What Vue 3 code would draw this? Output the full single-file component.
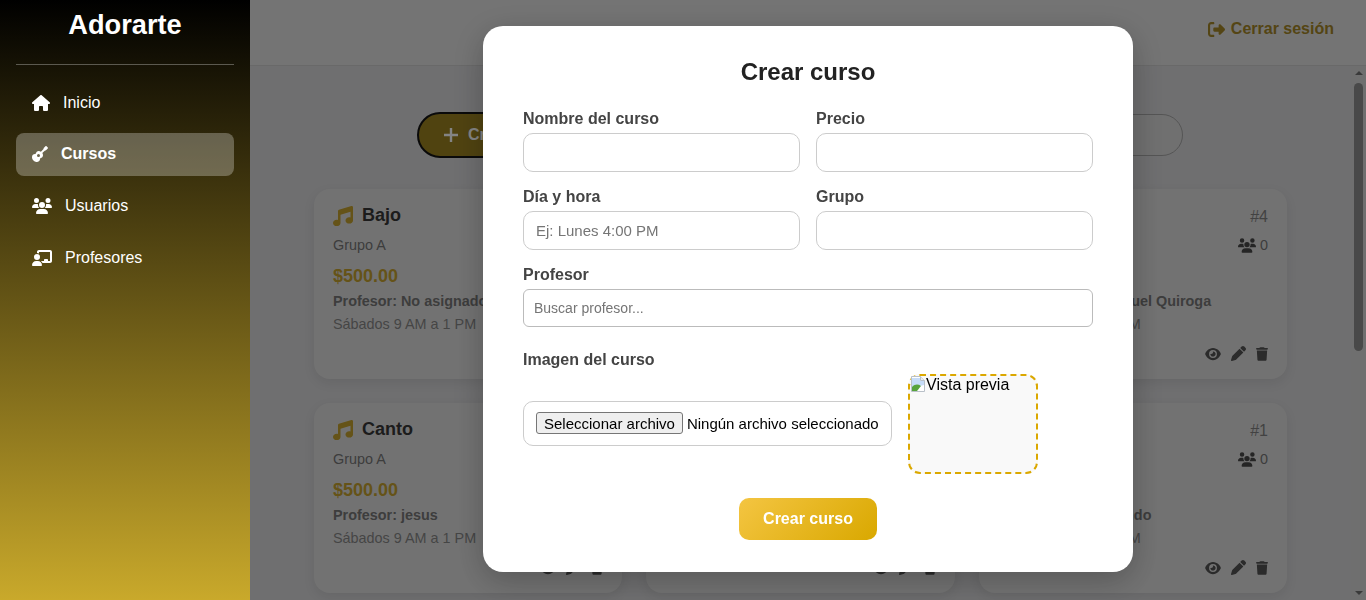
<script setup>
import { ref } from 'vue';

const menu = [
  { label: 'Inicio', icon: 'home' },
  { label: 'Cursos', icon: 'guitar', active: true },
  { label: 'Usuarios', icon: 'users' },
  { label: 'Profesores', icon: 'teacher' }
];

const icons = {
  home: { box: '0 0 576 512', d: 'M575.8 255.5c0 18-15 32.1-32 32.1h-32l.7 160.2c0 2.7-.2 5.4-.5 8.1V472c0 22.1-17.9 40-40 40H456c-1.1 0-2.2 0-3.3-.1c-1.4 .1-2.8 .1-4.2 .1H416 392c-22.1 0-40-17.9-40-40V448 384c0-17.7-14.3-32-32-32H256c-17.7 0-32 14.3-32 32v64 24c0 22.1-17.9 40-40 40H160 128.1c-1.5 0-3-.1-4.5-.2c-1.2 .1-2.4 .2-3.6 .2H104c-22.1 0-40-17.9-40-40V360c0-.9 0-1.9 .1-2.8V287.6H32c-18 0-32-14-32-32.1c0-9 3-17 10-24L266.4 8c7-7 15-8 22-8s15 2 21 7L564.8 231.5c8 7 12 15 11 24z' },
  guitar: { box: '0 0 512 512', d: 'M465 7c-9.4-9.4-24.6-9.4-33.9 0L383 55c-2.4 2.4-4.3 5.3-5.5 8.5l-15.4 41-77.5 77.6c-45.1-29.4-99.3-30.2-131 1.6c-11 11-18 24.6-21.4 39.6c-3.7 16.6-19.1 30.7-36.1 31.6c-25.6 1.3-49.3 10.7-67.3 28.6C-16 328.4-7.6 409.4 47.5 464.5s136.1 63.5 180.9 18.7c17.9-17.9 27.4-41.7 28.6-67.3c.9-17 15-32.3 31.6-36.1c15-3.4 28.6-10.5 39.6-21.4c31.8-31.8 31-85.9 1.6-131l77.6-77.6 41-15.4c3.2-1.2 6.1-3.1 8.5-5.5l48-48c9.4-9.4 9.4-24.6 0-33.9L465 7zM208 256a48 48 0 1 1 0 96 48 48 0 1 1 0-96z' },
  users: { box: '0 0 640 512', d: 'M144 0a80 80 0 1 1 0 160A80 80 0 1 1 144 0zM512 0a80 80 0 1 1 0 160A80 80 0 1 1 512 0zM0 298.7C0 239.8 47.8 192 106.7 192h42.7c15.9 0 31 3.5 44.6 9.7c-1.3 7.2-1.9 14.7-1.9 22.3c0 38.2 16.8 72.5 43.3 96c-.2 0-.4 0-.7 0H21.3C9.6 320 0 310.4 0 298.7zM405.3 320c-.2 0-.4 0-.7 0c26.6-23.5 43.3-57.8 43.3-96c0-7.6-.7-15-1.9-22.3c13.6-6.3 28.7-9.7 44.6-9.7h42.7C592.2 192 640 239.8 640 298.7c0 11.8-9.6 21.3-21.3 21.3H405.3zM224 224a96 96 0 1 1 192 0 96 96 0 1 1 -192 0zM128 485.3C128 411.7 187.7 352 261.3 352H378.7C452.3 352 512 411.7 512 485.3c0 14.7-11.9 26.7-26.7 26.7H154.7c-14.7 0-26.7-11.9-26.7-26.7z' },
  teacher: { box: '0 0 640 512', d: 'M160 64c0-35.3 28.7-64 64-64H576c35.3 0 64 28.7 64 64V352c0 35.3-28.7 64-64 64H336.8c-11.8-25.5-29.9-47.5-52.4-64H384V320c0-17.7 14.3-32 32-32h64c17.7 0 32 14.3 32 32v32h64V64L224 64v49.1C205.2 102.2 183.3 96 160 96V64zm0 64a96 96 0 1 1 0 192 96 96 0 1 1 0-192zM133.3 352h53.3C260.3 352 320 411.7 320 485.3c0 14.7-11.9 26.7-26.7 26.7H26.7C11.9 512 0 500.1 0 485.3C0 411.7 59.7 352 133.3 352z' },
  music: { box: '0 0 512 512', d: 'M499.1 6.3c8.1 6 12.9 15.6 12.9 25.7v72V368c0 44.2-43 80-96 80s-96-35.8-96-80s43-80 96-80c11.2 0 22 1.6 32 4.6V147L192 223.8V432c0 44.2-43 80-96 80s-96-35.8-96-80s43-80 96-80c11.2 0 22 1.6 32 4.6V200 128c0-14.1 9.3-26.6 22.8-30.7l320-96c9.7-2.9 20.2-1.1 28.3 5z' },
  eye: { box: '0 0 576 512', d: 'M288 32c-80.8 0-145.5 36.8-192.6 80.6C48.6 156 17.3 208 2.5 243.7c-3.3 7.9-3.3 16.7 0 24.6C17.3 304 48.6 356 95.4 399.4C142.5 443.2 207.2 480 288 480s145.5-36.8 192.6-80.6c46.8-43.5 78.1-95.4 93-131.1c3.3-7.9 3.3-16.7 0-24.6c-14.9-35.7-46.2-87.7-93-131.1C433.5 68.8 368.8 32 288 32zM144 256a144 144 0 1 1 288 0 144 144 0 1 1 -288 0zm144-64c0 35.3-28.7 64-64 64c-7.1 0-13.9-1.2-20.3-3.3c-5.5-1.8-11.9 1.6-11.7 7.4c.3 6.9 1.3 13.8 3.2 20.7c13.7 51.2 66.4 81.6 117.6 67.9s81.6-66.4 67.9-117.6c-11.1-41.5-47.8-69.4-88.6-71.1c-5.8-.2-9.2 6.1-7.4 11.7c2.1 6.4 3.3 13.2 3.3 20.3z' },
  pen: { box: '0 0 512 512', d: 'M362.7 19.3L314.3 67.7 444.3 197.7l48.4-48.4c25-25 25-65.5 0-90.5L453.3 19.3c-25-25-65.5-25-90.5 0zm-71 71L58.6 323.5c-10.4 10.4-18 23.3-22.2 37.4L1 481.2C-1.5 489.7 .8 498.8 7 505s15.3 8.5 23.7 6.1l120.3-35.4c14.1-4.2 27-11.8 37.4-22.2L421.7 220.3 291.7 90.3z' },
  trash: { box: '0 0 448 512', d: 'M135.2 17.7L128 32H32C14.3 32 0 46.3 0 64S14.3 96 32 96H416c17.7 0 32-14.3 32-32s-14.3-32-32-32H320l-7.2-14.3C307.4 6.8 296.3 0 284.2 0H163.8c-12.1 0-23.2 6.8-28.6 17.7zM416 128H32L53.2 467c1.6 25.3 22.6 45 47.9 45H346.9c25.3 0 46.3-19.7 47.9-45L416 128z' },
  logout: { box: '0 0 512 512', d: 'M377.9 105.9L500.7 228.7c7.2 7.2 11.3 17.1 11.3 27.3s-4.1 20.1-11.3 27.3L377.9 406.1c-6.4 6.4-15 9.9-24 9.9c-18.7 0-33.9-15.2-33.9-33.9l0-62.1-128 0c-17.7 0-32-14.3-32-32l0-64c0-17.7 14.3-32 32-32l128 0 0-62.1c0-18.7 15.2-33.9 33.9-33.9c9 0 17.6 3.6 24 9.9zM160 96L96 96c-17.7 0-32 14.3-32 32l0 256c0 17.7 14.3 32 32 32l64 0c17.7 0 32 14.3 32 32s-14.3 32-32 32l-64 0c-53 0-96-43-96-96L0 128C0 75 43 32 96 32l64 0c17.7 0 32 14.3 32 32s-14.3 32-32 32z' }
};

const cursos = ref([
  { id: 6, nombre: 'Bajo', grupo: 'Grupo A', profesor: 'No asignado' },
  { id: 5, nombre: 'Batería', grupo: 'Grupo A', profesor: 'No asignado' },
  { id: 4, nombre: 'Guitarra', grupo: 'Grupo A', profesor: 'José Manuel Quiroga' },
  { id: 3, nombre: 'Canto', grupo: 'Grupo A', profesor: 'jesus' },
  { id: 2, nombre: 'Piano', grupo: 'Grupo A', profesor: 'jesus' },
  { id: 1, nombre: 'Violín', grupo: 'Grupo A', profesor: 'Ana Orlando' },
  { id: 7, nombre: 'Teclado', grupo: 'Grupo B', profesor: 'jesus' },
  { id: 8, nombre: 'Ukelele', grupo: 'Grupo B', profesor: 'jesus' },
  { id: 9, nombre: 'Saxofón', grupo: 'Grupo B', profesor: 'jesus' },
  { id: 10, nombre: 'Flauta', grupo: 'Grupo B', profesor: 'jesus' },
  { id: 11, nombre: 'Trompeta', grupo: 'Grupo B', profesor: 'jesus' },
  { id: 12, nombre: 'Coro', grupo: 'Grupo B', profesor: 'jesus' }
]);
</script>

<template>
  <div class="layout">
    <aside class="sidebar">
      <h1 class="brand">Adorarte</h1>
      <hr class="divider" />
      <nav class="menu">
        <a v-for="item in menu" :key="item.label" class="menu-item" :class="['m-' + item.icon, { active: item.active }]">
          <svg class="menu-icon" :viewBox="icons[item.icon].box"><path :d="icons[item.icon].d" /></svg>
          <span>{{ item.label }}</span>
        </a>
      </nav>
    </aside>

    <div class="content">
      <header class="topbar">
        <a class="logout">
          <svg class="logout-icon" :viewBox="icons.logout.box"><path :d="icons.logout.d" /></svg>
          Cerrar sesión
        </a>
      </header>

      <div class="body-row">
        <main class="main">
          <div class="toolbar">
            <button class="new-btn">
              <svg class="plus" viewBox="0 0 16 16"><path d="M8 1v14M1 8h14" /></svg>
              Crear curso
            </button>
            <input class="search" type="text" />
          </div>

          <div class="grid">
            <article v-for="curso in cursos" :key="curso.id" class="card">
              <div class="card-row">
                <div class="card-title">
                  <svg class="music" :viewBox="icons.music.box"><path :d="icons.music.d" /></svg>
                  {{ curso.nombre }}
                </div>
                <span class="card-id">#{{ curso.id }}</span>
              </div>
              <div class="card-row second">
                <span class="grupo">{{ curso.grupo }}</span>
                <span class="alumnos">
                  <svg class="users-ic" :viewBox="icons.users.box"><path :d="icons.users.d" /></svg>
                  0
                </span>
              </div>
              <div class="price">$500.00</div>
              <div class="prof">Profesor: {{ curso.profesor }}</div>
              <div class="horario">Sábados 9 AM a 1 PM</div>
              <div class="actions">
                <svg class="eye" :viewBox="icons.eye.box"><path :d="icons.eye.d" /></svg>
                <svg class="pen" :viewBox="icons.pen.box"><path :d="icons.pen.d" /></svg>
                <svg class="trash" :viewBox="icons.trash.box"><path :d="icons.trash.d" /></svg>
              </div>
            </article>
          </div>
        </main>

        <div class="scrollbar">
          <span class="arrow up"></span>
          <span class="track"><span class="thumb"></span></span>
          <span class="arrow down"></span>
        </div>
      </div>
    </div>

    <div class="overlay">
      <form class="modal" @submit.prevent>
        <h2 class="modal-title">Crear curso</h2>

        <div class="form-grid">
          <div class="field">
            <label>Nombre del curso</label>
            <input type="text" />
          </div>
          <div class="field">
            <label>Precio</label>
            <input type="text" />
          </div>
          <div class="field">
            <label>Día y hora</label>
            <input type="text" placeholder="Ej: Lunes 4:00 PM" />
          </div>
          <div class="field">
            <label>Grupo</label>
            <input type="text" />
          </div>
          <div class="field wide">
            <label>Profesor</label>
            <input class="prof-input" type="text" placeholder="Buscar profesor..." />
          </div>
        </div>

        <div class="image-label">Imagen del curso</div>
        <div class="image-row">
          <div class="file-box">
            <button type="button" class="file-btn">Seleccionar archivo</button>
            <span>Ningún archivo seleccionado</span>
          </div>
          <div class="preview">
            <svg class="broken" viewBox="0 0 16 16">
              <path d="M1.5.5h9l4 4v11h-13z" fill="#fff" stroke="#b9c0c8" />
              <path d="M10.5.5v4h4" fill="#e8ebee" stroke="#b9c0c8" />
              <path d="M2 2h8v3h4v4L2 12z" fill="#c6dcf8" />
              <path d="M2 15v-4c3-3 6-3 9-1l-4 5z" fill="#58a43c" />
            </svg>
            <span>Vista previa</span>
          </div>
        </div>

        <div class="submit-row">
          <button type="submit" class="submit">Crear curso</button>
        </div>
      </form>
    </div>
  </div>
</template>

<style scoped>
.layout {
  display: flex;
  height: 600px;
  overflow: hidden;
  font-family: "Liberation Sans", Arial, sans-serif;
}

.sidebar {
  position: relative;
  z-index: 20;
  flex: 0 0 250px;
  box-sizing: border-box;
  padding: 10px 16px 0;
  color: #fff;
  background: linear-gradient(180deg, #000 0%, #c9a92b 100%);
}

.brand {
  margin: 0;
  font-size: 27.2px;
  line-height: 30px;
  text-align: center;
  font-weight: 700;
}

.divider {
  margin: 24px 0 16px;
  border: 0;
  border-top: 1px solid rgba(255, 255, 255, 0.3);
}

.menu {
  display: flex;
  flex-direction: column;
  gap: 9px;
}

.menu-item {
  display: flex;
  align-items: center;
  gap: 13px;
  height: 43px;
  padding: 0 16px 2px;
  border-radius: 8px;
  font-size: 16px;
  box-sizing: border-box;
}

.menu-item.m-home {
  padding-bottom: 0;
}

.menu-item.active {
  font-weight: 700;
  background: rgba(255, 255, 255, 0.28);
}

.menu-icon {
  height: 16px;
  fill: #fff;
}

.m-home .menu-icon { width: 18px; }
.m-guitar .menu-icon { width: 16px; }
.m-users .menu-icon,
.m-teacher .menu-icon { width: 20px; }

.content {
  flex: 1;
  min-width: 0;
  display: flex;
  flex-direction: column;
}

.topbar {
  flex: 0 0 66px;
  box-sizing: border-box;
  display: flex;
  justify-content: flex-end;
  padding: 20px 32px 0 0;
  background: #c2c2c2;
  border-bottom: 1px solid #b0b0b0;
}

.logout {
  display: flex;
  gap: 6px;
  height: 18px;
  align-items: center;
  color: #8c7322;
  font-size: 16px;
  font-weight: 700;
}

.logout-icon {
  width: 17px;
  height: 17px;
  fill: currentColor;
}

.body-row {
  flex: 1;
  min-height: 0;
  display: flex;
}

.main {
  flex: 1;
  min-width: 0;
  overflow: hidden;
  box-sizing: border-box;
  padding: 46px 64px 40px;
  background: #b9b9bb;
}

.toolbar {
  display: flex;
  align-items: center;
  justify-content: center;
  gap: 16px;
  margin-bottom: 31px;
  padding-right: 1px;
}

.new-btn {
  display: flex;
  align-items: center;
  gap: 9px;
  width: 174px;
  height: 46px;
  padding: 0 0 0 24px;
  box-sizing: border-box;
  border: 2px solid #111;
  border-radius: 23px;
  background: #86701c;
  color: #ddd;
  font: 700 16px "Liberation Sans", Arial, sans-serif;
}

.plus {
  width: 16px;
  height: 16px;
  fill: none;
  stroke: #ddd;
  stroke-width: 2.4;
}

.search {
  width: 576px;
  height: 42px;
  box-sizing: border-box;
  border: 1px solid #8e8e8e;
  border-radius: 21px;
  background: #bbb;
}

.grid {
  display: grid;
  grid-template-columns: repeat(3, 1fr);
  gap: 24px;
}

.card {
  height: 190px;
  box-sizing: border-box;
  padding: 14px 19px 18px;
  display: flex;
  flex-direction: column;
  border-radius: 16px;
  background: #bfbfbf;
  box-shadow: 0 4px 12px rgba(0, 0, 0, 0.08);
  font-size: 14.4px;
}

.card-row {
  display: flex;
  justify-content: space-between;
  align-items: center;
}

.card-title {
  display: flex;
  align-items: center;
  gap: 9px;
  font-size: 18px;
  font-weight: 700;
  color: #303030;
  line-height: 20px;
}

.music {
  width: 20px;
  height: 20px;
  fill: #a88a28;
  margin-top: 3px;
}

.card-id {
  color: #6e6e6e;
  font-size: 16px;
  line-height: 17px;
  margin-top: 4px;
}

.second {
  margin-top: 11px;
}

.grupo {
  color: #666;
}

.alumnos {
  display: flex;
  align-items: center;
  gap: 4px;
  color: #666;
}

.users-ic {
  width: 18px;
  height: 15px;
  fill: #3e3e3e;
}

.price {
  margin-top: 13px;
  color: #a88a28;
  font-size: 18px;
  font-weight: 700;
  line-height: 20px;
}

.prof {
  margin-top: 7px;
  color: #666;
  font-weight: 700;
}

.horario {
  margin-top: 7px;
  color: #747474;
}

.actions {
  margin-top: auto;
  display: flex;
  justify-content: flex-end;
  align-items: center;
  gap: 10px;
}

.actions svg {
  height: 14px;
  fill: #484848;
}

.eye { width: 16px; }
.actions .pen { width: 15px; height: 15px; }
.trash { width: 12px; }

.scrollbar {
  flex: 0 0 15px;
  display: flex;
  flex-direction: column;
  align-items: center;
  background: #bababa;
}

.arrow {
  width: 0;
  box-sizing: content-box;
  border-left: 4px solid transparent;
  border-right: 4px solid transparent;
}

.arrow.up {
  flex: 0 0 0;
  border-bottom: 4px solid #626262;
  margin: 5px 0 8px;
}

.arrow.down {
  flex: 0 0 0;
  border-top: 4px solid #626262;
  margin: 8px 0 5px;
}

.track {
  flex: 1;
  width: 100%;
  display: flex;
  justify-content: center;
}

.thumb {
  width: 9px;
  height: 268px;
  border-radius: 5px;
  background: #7a7a7a;
}

.overlay {
  position: fixed;
  z-index: 10;
  top: 0;
  right: 0;
  bottom: 0;
  left: 250px;
  box-sizing: border-box;
  padding-bottom: 2px;
  display: flex;
  align-items: center;
  justify-content: center;
  background: rgba(0, 0, 0, 0.4);
}

.modal {
  width: 650px;
  box-sizing: border-box;
  padding: 32px 40px;
  border-radius: 20px;
  background: #fff;
  box-shadow: 0 8px 32px rgba(0, 0, 0, 0.25);
}

.modal-title {
  margin: 0 0 24px;
  font-size: 24px;
  line-height: 28px;
  font-weight: 700;
  text-align: center;
  color: #222;
}

.form-grid {
  display: grid;
  grid-template-columns: 1fr 1fr;
  column-gap: 16px;
  row-gap: 16px;
}

.field {
  display: flex;
  flex-direction: column;
  gap: 5px;
  min-width: 0;
}

.field.wide {
  grid-column: 1 / 3;
}

.field label,
.image-label {
  font-size: 16px;
  line-height: 18px;
  font-weight: 700;
  color: #444;
}

.field input {
  height: 39px;
  box-sizing: border-box;
  padding: 0 12px;
  border: 1px solid #ccc;
  border-radius: 10px;
  background: #fff;
  font-family: inherit;
  font-size: 15px;
  outline: none;
}

.field .prof-input {
  height: 38px;
  padding: 0 10px;
  border-color: #bbb;
  border-radius: 6px;
  font-size: 14px;
}

input::placeholder {
  color: #757575;
}

.image-label {
  margin-top: 24px;
}

.image-row {
  display: flex;
  align-items: center;
  gap: 16px;
  margin-top: 5px;
}

.file-box {
  flex: 0 0 369px;
  height: 45px;
  box-sizing: border-box;
  margin-bottom: 2px;
  display: flex;
  align-items: center;
  gap: 4px;
  padding: 0 12px;
  border: 1px solid #ccc;
  border-radius: 10px;
  color: #000;
  font-size: 15px;
  white-space: nowrap;
}

.file-btn {
  height: 22px;
  padding: 0 7px;
  border: 1px solid #767676;
  border-radius: 3px;
  background: #efefef;
  color: #000;
  font: 15px "Liberation Sans", Arial, sans-serif;
  white-space: nowrap;
}

.preview {
  flex: 0 0 130px;
  height: 100px;
  box-sizing: border-box;
  display: flex;
  align-items: flex-start;
  border: 2px dashed #dba800;
  border-radius: 12px;
  background: #f9f9f9;
  color: #000;
  font-size: 16px;
  line-height: 18px;
}

.broken {
  flex: 0 0 16px;
  width: 16px;
  height: 16px;
}

.submit-row {
  display: flex;
  justify-content: center;
  margin-top: 24px;
}

.submit {
  width: 138px;
  height: 42px;
  border: 0;
  border-radius: 10px;
  background: linear-gradient(135deg, #f4c542, #d9a800);
  color: #fff;
  font: 700 16px "Liberation Sans", Arial, sans-serif;
}
</style>

<style>
html, body {
  margin: 0;
  overflow: hidden;
}
</style>
